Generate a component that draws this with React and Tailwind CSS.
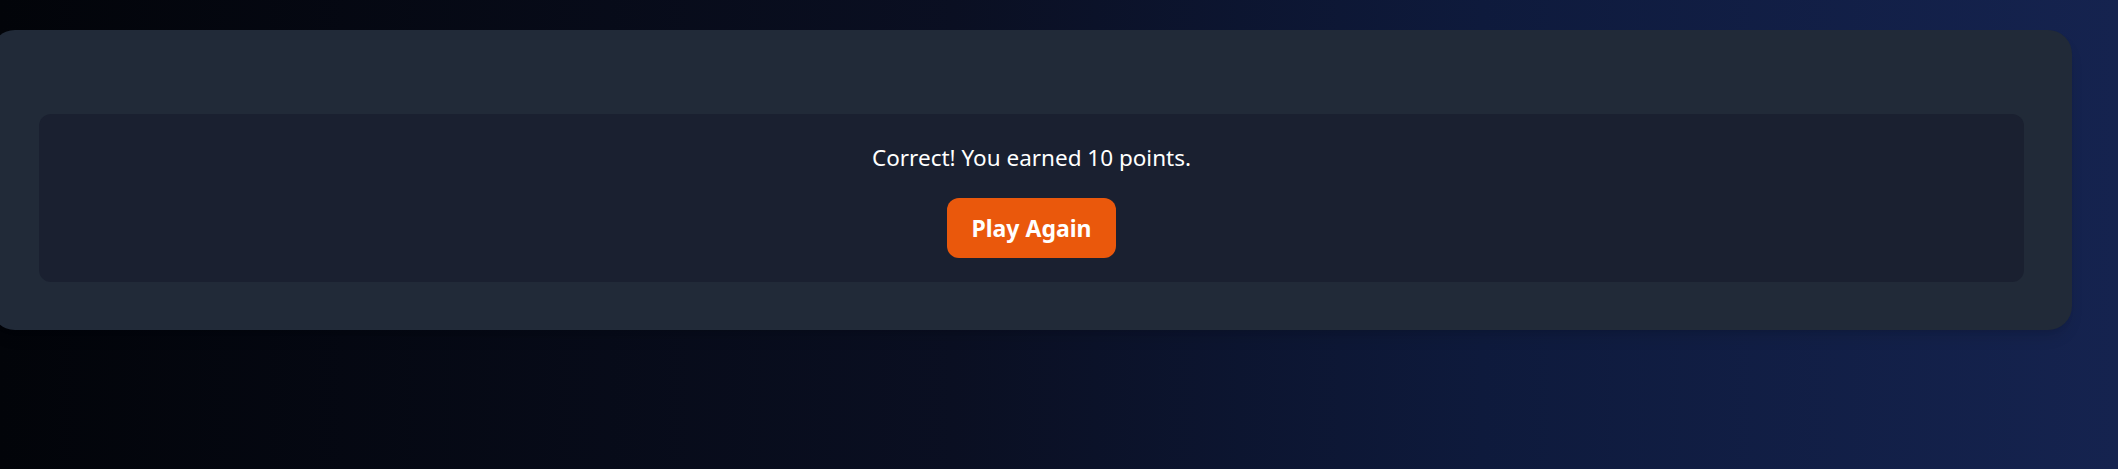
import React from 'react';

const App = () => {
  return (
    <div className="min-h-screen w-full overflow-hidden bg-[linear-gradient(to_right,#020409_0%,#0a0f22_45%,#0e1a3c_70%,#15234f_100%)] pt-[30px] font-['Noto_Sans',sans-serif]">
      {/* Result card */}
      <div className="-ml-[9px] w-[2081px] rounded-[24px] bg-[#212a38] px-[48px] pt-[84px] pb-[48px] shadow-lg">
        <div className="flex flex-col items-center rounded-[12px] bg-[#1a2030] p-[24px]">
          <p className="pt-[2px] text-[22.5px] leading-[36px] text-white">Correct! You earned 10 points.</p>
          <button className="mt-[22px] h-[60px] rounded-[12px] bg-[#ea580c] px-[24px] text-[23px] font-bold text-white">
            Play Again
          </button>
        </div>
      </div>
    </div>
  );
};

export default App;
